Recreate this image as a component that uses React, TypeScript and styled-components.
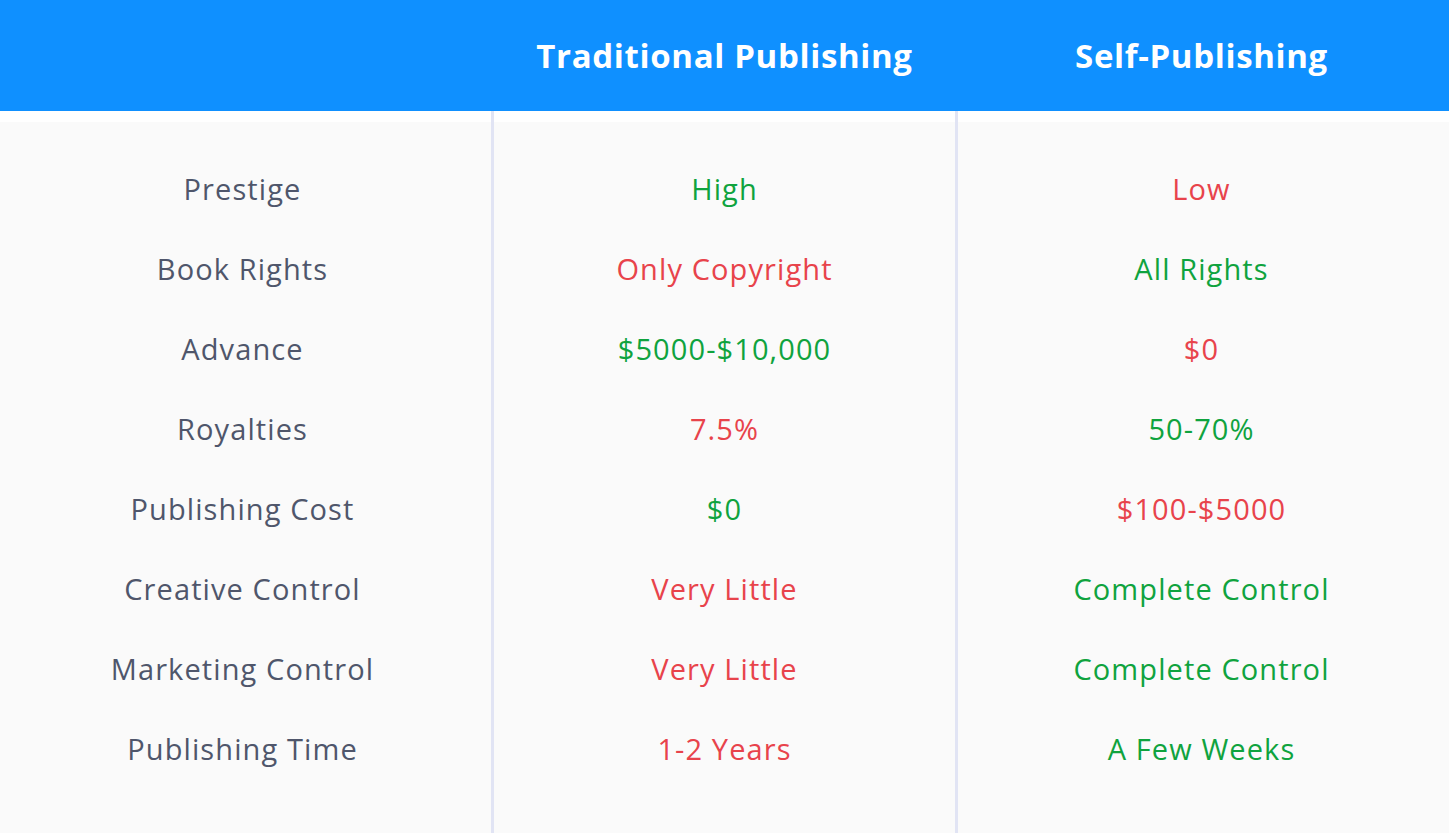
import React from "react";
import styled, { createGlobalStyle } from "styled-components";

const Global = createGlobalStyle`
  html, body { margin: 0; padding: 0; background: #fafafa; }
  body { font-family: "Open Sans", "Lato", sans-serif; -webkit-font-smoothing: antialiased; }
`;

const Page = styled.div`
  width: 1449px;
  height: 833px;
  display: grid;
  grid-template-rows: 111px 1fr;
  background: #fafafa;
  overflow: hidden;
`;

const Header = styled.div`
  display: grid;
  grid-template-columns: 491px 3px 461px 3px 491px;
  background: #0f90ff;
  align-items: center;
`;

const HeadCell = styled.div<{ $shift?: number }>`
  color: #ffffff;
  font-weight: 700;
  font-size: 33px;
  letter-spacing: 0.65px;
  text-align: center;
  padding-bottom: 0px;
  padding-right: ${(p) => p.$shift ?? 0}px;
`;

const Body = styled.div`
  display: grid;
  grid-template-columns: 491px 3px 461px 3px 491px;
  background: linear-gradient(#ffffff 0, #ffffff 11px, #fafafa 11px);
`;

const Column = styled.div<{ $shift?: number }>`
  display: flex;
  flex-direction: column;
  padding-top: 37px;
  padding-right: ${(p) => p.$shift ?? 0}px;
`;

const Divider = styled.div`
  background: #e1e4f4;
`;

const Cell = styled.div<{ $tone: "label" | "good" | "bad" }>`
  height: 80px;
  display: flex;
  align-items: center;
  justify-content: center;
  font-size: 29px;
  letter-spacing: 1.1px;
  color: ${(p) =>
    p.$tone === "good" ? "#0fa33e" : p.$tone === "bad" ? "#e8434b" : "#4f566b"};
`;

type Row = { label: string; trad: [string, boolean]; self: [string, boolean] };

const rows: Row[] = [
  { label: "Prestige", trad: ["High", true], self: ["Low", false] },
  { label: "Book Rights", trad: ["Only Copyright", false], self: ["All Rights", true] },
  { label: "Advance", trad: ["$5000-$10,000", true], self: ["$0", false] },
  { label: "Royalties", trad: ["7.5%", false], self: ["50-70%", true] },
  { label: "Publishing Cost", trad: ["$0", true], self: ["$100-$5000", false] },
  { label: "Creative Control", trad: ["Very Little", false], self: ["Complete Control", true] },
  { label: "Marketing Control", trad: ["Very Little", false], self: ["Complete Control", true] },
  { label: "Publishing Time", trad: ["1-2 Years", false], self: ["A Few Weeks", true] },
];

export default function App() {
  return (
    <>
      <Global />
      <Page>
        <Header>
          <div />
          <div />
          <HeadCell>Traditional Publishing</HeadCell>
          <div />
          <HeadCell $shift={4}>Self-Publishing</HeadCell>
        </Header>
        <Body>
          <Column $shift={6}>
            {rows.map((r) => (
              <Cell key={r.label} $tone="label">{r.label}</Cell>
            ))}
          </Column>
          <Divider />
          <Column>
            {rows.map((r) => (
              <Cell key={r.label} $tone={r.trad[1] ? "good" : "bad"}>{r.trad[0]}</Cell>
            ))}
          </Column>
          <Divider />
          <Column $shift={4}>
            {rows.map((r) => (
              <Cell key={r.label} $tone={r.self[1] ? "good" : "bad"}>{r.self[0]}</Cell>
            ))}
          </Column>
        </Body>
      </Page>
    </>
  );
}
